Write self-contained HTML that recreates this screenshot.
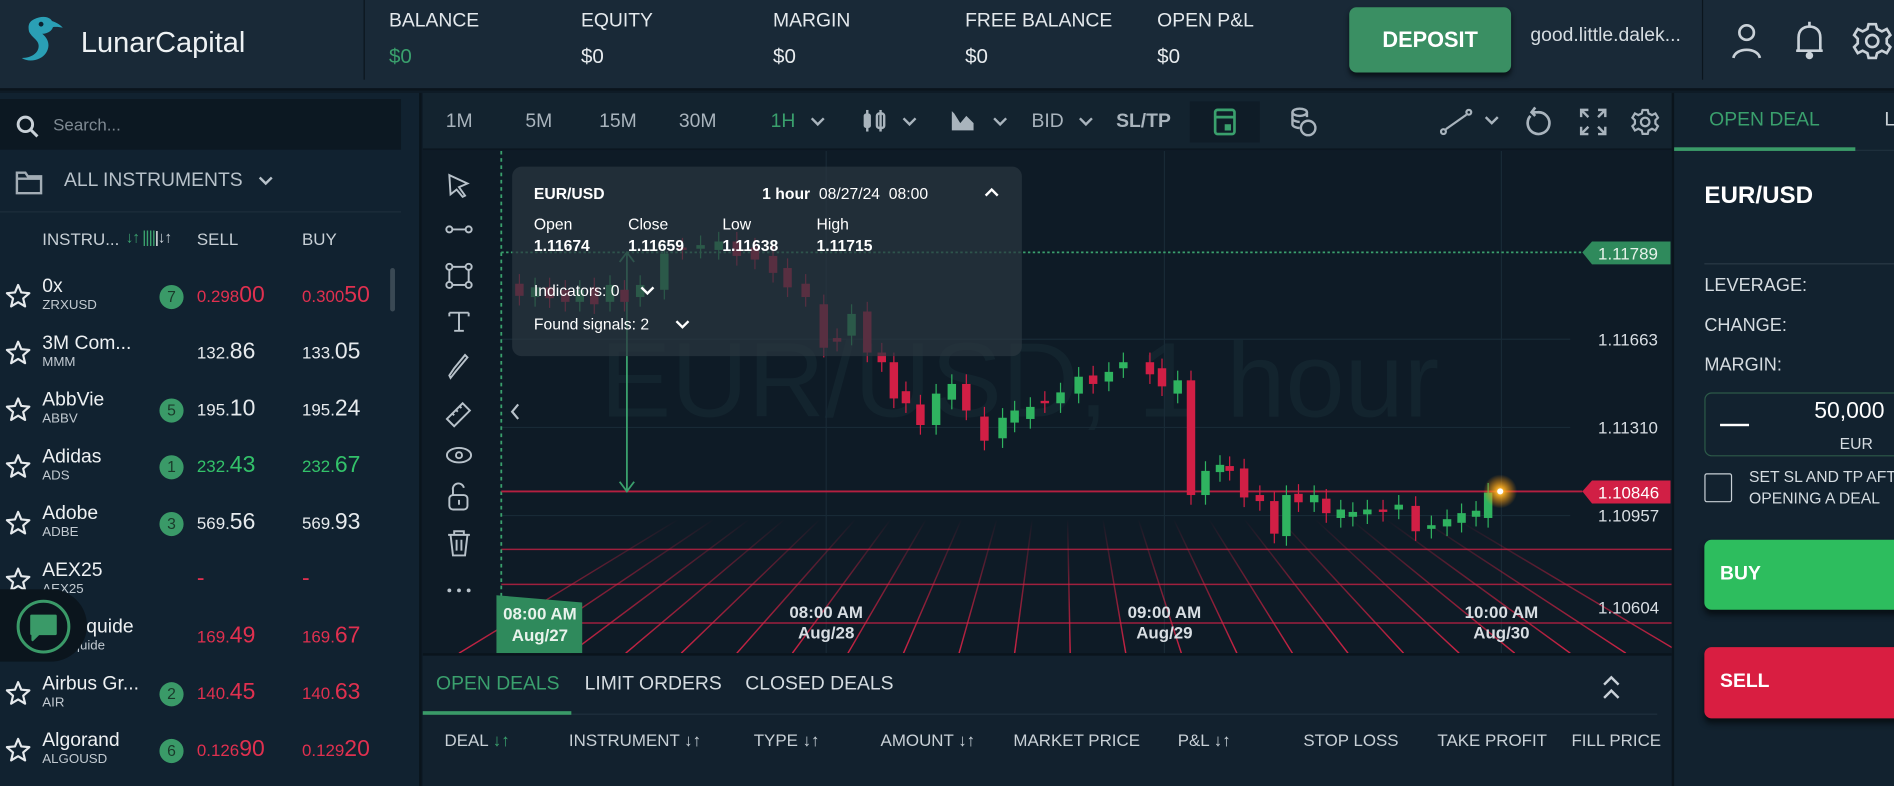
<!DOCTYPE html>
<html><head><meta charset="utf-8">
<style>
*{margin:0;padding:0;box-sizing:border-box}
html,body{width:1894px;height:786px;overflow:hidden;background:#0e1b26}
body{font-family:"Liberation Sans",sans-serif;color:#c9d1d8}
#w{position:absolute;left:0;top:0;width:1568px;height:651px;transform:scale(1.2079,1.2074);transform-origin:0 0;background:#0e1b26;overflow:hidden}
.a{position:absolute;white-space:nowrap}
.hdr{left:0;top:0;width:1568px;height:75px;background:#192937;border-bottom:2px solid #0a141c}
.lbl{font-size:16px;color:#e4e9ed}
.val{font-size:17px;color:#e8ecef}
.side{left:0;top:77px;width:349px;height:574px;background:#112230;border-right:2px solid #0a141c}
.row .nm{font-size:16px;color:#eef1f3}
.row .sy{font-size:11px;color:#c2cad1}
.badge{width:20px;height:20px;border-radius:50%;background:#3a9a68;color:#1a3a2a;font-size:13px;text-align:center;line-height:20px}
.pr{font-size:14px}
.pr b{font-weight:normal;font-size:19px}
.tb{font-size:16px;color:#a9b4bd}
.g{color:#3aa06d}
.r{color:#e0304f}
.gr{color:#33c26a}
</style></head><body><div id="w">

<!-- header -->
<div class="a hdr"></div>
<svg class="a" style="left:14px;top:12px" width="44" height="42" viewBox="0 0 44 42">
<path d="M14 4 C22 0 30 2 30 9 C30 14 24 16 21 16 C26 20 28 26 24 32 C20 38 10 40 4 36 C12 36 18 32 18 26 C18 21 12 19 10 14 C9 9 10 6 14 4Z" fill="#2a9fb5"/>
<path d="M22 5 C26 4 34 6 38 11 C34 10 30 10 28 11Z" fill="#2a9fb5"/>
<circle cx="20" cy="8" r="2" fill="#0b2230"/>
</svg>
<div class="a" style="left:67px;top:22px;font-size:24px;color:#eef2f4">LunarCapital</div>
<div class="a" style="left:301px;top:0;width:1px;height:66px;background:#0b151d"></div>
<div class="a lbl" style="left:322px;top:9px">BALANCE</div><div class="a val g" style="left:322px;top:37px">$0</div>
<div class="a lbl" style="left:481px;top:9px">EQUITY</div><div class="a val" style="left:481px;top:37px">$0</div>
<div class="a lbl" style="left:640px;top:9px">MARGIN</div><div class="a val" style="left:640px;top:37px">$0</div>
<div class="a lbl" style="left:799px;top:9px">FREE BALANCE</div><div class="a val" style="left:799px;top:37px">$0</div>
<div class="a lbl" style="left:958px;top:9px">OPEN P&amp;L</div><div class="a val" style="left:958px;top:37px">$0</div>
<div class="a" style="left:1117px;top:6px;width:134px;height:54px;background:#3a8f63;border-radius:6px;box-shadow:0 3px 4px #0a1218;color:#fff;font-weight:bold;font-size:18px;text-align:center;line-height:54px">DEPOSIT</div>
<div class="a" style="left:1267px;top:21px;font-size:16px;color:#d5dce1">good.little.dalek...</div>
<div class="a" style="left:1409px;top:0;width:1px;height:66px;background:#0b151d"></div>
<svg class="a" style="left:1430px;top:17px" width="32" height="34" viewBox="0 0 32 34" fill="none" stroke="#c9d1d8" stroke-width="2.2"><circle cx="16" cy="10" r="6"/><path d="M5 31 C7 22 25 22 27 31"/></svg>
<svg class="a" style="left:1482px;top:15px" width="32" height="36" viewBox="0 0 32 36" fill="none" stroke="#c9d1d8" stroke-width="2.2"><path d="M16 3 V6 M7 27 V16 C7 10 11 7 16 7 C21 7 25 10 25 16 V27 H5 M27 27 H5"/><circle cx="16" cy="31" r="2" fill="#c9d1d8"/></svg>
<svg class="a" style="left:1533px;top:17px" width="34" height="34" viewBox="0 0 34 34" fill="none" stroke="#c9d1d8" stroke-width="2.2"><circle cx="17" cy="17" r="5"/><path d="M14 3h6l1 4 4 2 4-2 3 5-3 3v4l3 3-3 5-4-2-4 2-1 4h-6l-1-4-4-2-4 2-3-5 3-3v-4l-3-3 3-5 4 2 4-2z"/></svg>

<!-- sidebar -->
<div class="a side"></div>
<div class="a" style="left:0;top:82px;width:332px;height:42px;background:#0c1822"></div>
<svg class="a" style="left:12px;top:94px" width="22" height="22" viewBox="0 0 22 22" fill="none" stroke="#c9d1d8" stroke-width="2.4"><circle cx="9" cy="9" r="6"/><path d="M13.5 13.5 L19 19"/></svg>
<div class="a" style="left:44px;top:95px;font-size:14px;color:#7f8a93">Search...</div>
<svg class="a" style="left:12px;top:140px" width="24" height="22" viewBox="0 0 24 22" fill="none" stroke="#a3adb5" stroke-width="2"><path d="M2 3 H9 L11 6 H22 V20 H2 Z M2 8 H22"/></svg>
<div class="a" style="left:53px;top:141px;font-size:16px;color:#b8c2ca">ALL INSTRUMENTS</div>
<svg class="a" style="left:212px;top:144px" width="16" height="12" viewBox="0 0 16 12" fill="none" stroke="#b8c2ca" stroke-width="2"><path d="M3 3 L8 8 L13 3"/></svg>
<div class="a" style="left:0;top:175px;width:332px;height:1px;background:#1d2e3b"></div>
<div class="a" style="left:35px;top:190px;font-size:14px;color:#c8d0d6">INSTRU...</div>
<div class="a" style="left:104px;top:188px;font-size:13px;color:#3aa06d;letter-spacing:-1px">↓↑ <span style="font-size:14px">||||</span><span style="color:#fff">|</span><span style="color:#c8d0d6">↓↑</span></div>
<div class="a" style="left:163px;top:190px;font-size:14px;color:#c8d0d6">SELL</div>
<div class="a" style="left:250px;top:190px;font-size:14px;color:#c8d0d6">BUY</div>
<div class="a" style="left:323px;top:222px;width:4px;height:36px;background:#3a4954;border-radius:2px"></div>

<div id="rows"></div>

<div class="a" style="left:0;top:488px;width:72px;height:60px;background:#0b151d;border-radius:0 30px 30px 0"></div>
<svg class="a" style="left:12px;top:495px" width="48" height="48" viewBox="0 0 48 48"><circle cx="24" cy="24" r="21" fill="none" stroke="#3a9a68" stroke-width="2.5"/><path d="M14 15 H34 V30 H20 L15 35 V30 H14 Z" fill="#3a9a68" stroke="#3a9a68" stroke-linejoin="round" stroke-width="2"/></svg>

<!-- toolbar -->
<div class="a" style="left:350px;top:77px;width:1034px;height:47px;background:#13232f;border-bottom:1px solid #0a141c"></div>
<div class="a tb" style="left:369px;top:92px">1M</div>
<div class="a tb" style="left:435px;top:92px">5M</div>
<div class="a tb" style="left:496px;top:92px">15M</div>
<div class="a tb" style="left:562px;top:92px">30M</div>
<div class="a tb g" style="left:638px;top:92px">1H</div>
<svg class="a" style="left:668px;top:94px;overflow:visible" width="480" height="16" fill="none" stroke="#a9b4bd" stroke-width="2">
<path d="M4 4 L9 9 L14 4"/>
<path d="M80 4 L85 9 L90 4"/>
<path d="M155 4 L160 9 L165 4"/>
<path d="M226 4 L231 9 L236 4"/>
</svg>
<svg class="a" style="left:713px;top:91px" width="22" height="18" viewBox="0 0 22 18"><rect x="2" y="3" width="6" height="12" rx="2" fill="#a9b4bd"/><rect x="13" y="3" width="6" height="12" rx="2" fill="none" stroke="#a9b4bd" stroke-width="2"/><path d="M5 0V18M16 0V18" stroke="#a9b4bd" stroke-width="2"/></svg>
<svg class="a" style="left:786px;top:90px" width="22" height="20" viewBox="0 0 22 20"><path d="M2 2 V18 H20 V12 L14 6 L9 12 L4 4Z" fill="#a9b4bd"/></svg>
<div class="a tb" style="left:854px;top:92px">BID</div>
<div class="a tb" style="left:924px;top:92px;font-weight:bold">SL/TP</div>
<div class="a" style="left:985px;top:84px;width:58px;height:34px;background:#0f1c27"></div>
<svg class="a" style="left:1003px;top:88px" width="22" height="26" viewBox="0 0 22 26" fill="none" stroke="#3aa06d" stroke-width="2.2"><rect x="3" y="3" width="16" height="20" rx="2"/><path d="M3 9 H19"/><rect x="12" y="16" width="3" height="3" fill="#3aa06d"/></svg>
<svg class="a" style="left:1066px;top:87px" width="26" height="28" viewBox="0 0 26 28" fill="none" stroke="#a9b4bd" stroke-width="2"><ellipse cx="10" cy="6" rx="6" ry="3"/><path d="M4 6V16C4 18 8 19 10 19M16 6V10"/><path d="M4 11C4 13 8 14 10 14"/><circle cx="17" cy="19" r="6"/></svg>
<svg class="a" style="left:1192px;top:90px" width="28" height="22" viewBox="0 0 28 22" fill="none" stroke="#a9b4bd" stroke-width="1.8"><circle cx="3" cy="19" r="2"/><circle cx="24" cy="3" r="2"/><path d="M5 17 L22 5"/></svg>
<svg class="a" style="left:1228px;top:94px" width="14" height="12" fill="none" stroke="#a9b4bd" stroke-width="2"><path d="M2 3 L7 8 L12 3"/></svg>
<svg class="a" style="left:1261px;top:88px" width="24" height="26" viewBox="0 0 24 26" fill="none" stroke="#a9b4bd" stroke-width="2.2"><path d="M6 8 A9 9 0 1 0 12 5 H8 M10 1 L7 5 L10 8"/></svg>
<svg class="a" style="left:1307px;top:89px" width="24" height="24" viewBox="0 0 24 24" fill="none" stroke="#a9b4bd" stroke-width="2"><path d="M2 8V2H8M2 2L8 8M22 8V2H16M22 2L16 8M2 16V22H8M2 22L8 16M22 16V22H16M22 22L16 16"/></svg>
<svg class="a" style="left:1350px;top:89px" width="24" height="24" viewBox="0 0 34 34" fill="none" stroke="#a9b4bd" stroke-width="2.6"><circle cx="17" cy="17" r="5"/><path d="M14 3h6l1 4 4 2 4-2 3 5-3 3v4l3 3-3 5-4-2-4 2-1 4h-6l-1-4-4-2-4 2-3-5 3-3v-4l-3-3 3-5 4 2 4-2z"/></svg>

<!-- chart -->
<svg class="a" id="ch" style="left:350px;top:125px" width="1035" height="416" viewBox="350 125 1035 416">
<defs>
<linearGradient id="rg" x1="0" y1="430" x2="0" y2="541" gradientUnits="userSpaceOnUse"><stop offset="0" stop-color="#c0203f" stop-opacity="0"/><stop offset="0.5" stop-color="#c0203f" stop-opacity="0.6"/><stop offset="1" stop-color="#e02448" stop-opacity="0.9"/></linearGradient>
<radialGradient id="glow"><stop offset="0" stop-color="#fff6c0"/><stop offset="0.25" stop-color="#ffb020" stop-opacity="0.9"/><stop offset="1" stop-color="#ff9000" stop-opacity="0"/></radialGradient>
</defs>
<rect x="350" y="125" width="1035" height="416" fill="#0e1b26"/>
<text x="497" y="345" font-size="88" fill="#13242e" font-family="Liberation Sans">EUR/USD, 1 hour</text>
<g stroke="#182a36" stroke-width="1"><path d="M684 125V541M964 125V541M1243 125V541M415 281H1300M415 354H1300M415 427H1300"/></g>
<g id="grid"></g>
<g stroke="#d02246" stroke-width="1.2" opacity="0.75"><path d="M415 455H1384M415 484H1384M415 516H1384"/></g>
<path d="M415 209H1310" stroke="#3aa06d" stroke-width="1.5" stroke-dasharray="2 2"/>
<path d="M415 125V495" stroke="#3aa06d" stroke-width="1.5" stroke-dasharray="3 3"/>
<path d="M415 407H1310" stroke="#b42040" stroke-width="1.5"/>
<path d="M519 209V407M513 217L519 209L525 217M513 399L519 407L525 399" stroke="#3aa06d" stroke-width="1.5" fill="none"/>
<g id="cd"></g>
<circle cx="1242" cy="407" r="14" fill="url(#glow)"/>
<circle cx="1242" cy="407" r="2.5" fill="#fff"/>
<path d="M1310 209L1318 200H1383V219H1318Z" fill="#2f8a5c"/>
<text x="1323" y="215" font-size="14" fill="#e6f2ea" font-family="Liberation Sans">1.11789</text>
<path d="M1310 407L1318 398H1383V417H1318Z" fill="#d11f45"/>
<text x="1323" y="413" font-size="14" fill="#fff" font-family="Liberation Sans">1.10846</text>
<g font-size="14" fill="#d8dee3" font-family="Liberation Sans">
<text x="1323" y="286">1.11663</text><text x="1323" y="359">1.11310</text><text x="1323" y="432">1.10957</text><text x="1323" y="508">1.10604</text>
</g>
<g font-size="14" fill="#d8dee3" font-family="Liberation Sans" text-anchor="middle" font-weight="bold">
<text x="684" y="512">08:00 AM</text><text x="684" y="529">Aug/28</text>
<text x="964" y="512">09:00 AM</text><text x="964" y="529">Aug/29</text>
<text x="1243" y="512">10:00 AM</text><text x="1243" y="529">Aug/30</text>
</g>
<path d="M411 493L482 499V541H411Z" fill="#2f8a5c"/>
<g font-size="14" fill="#e8f3ec" font-family="Liberation Sans" text-anchor="middle" font-weight="bold"><text x="447" y="513">08:00 AM</text><text x="447" y="531">Aug/27</text></g>
<!-- tools -->
<g fill="none" stroke="#b8c2ca" stroke-width="1.6">
<path d="M372 145L387 152L380 155L385 162L383 163L378 157L373 161Z"/>
<circle cx="372" cy="190" r="2.5"/><circle cx="388" cy="190" r="2.5"/><path d="M375 190H385"/>
<rect x="372" y="221" width="16" height="15"/><circle cx="372" cy="221" r="2.5" fill="#0e1b26"/><circle cx="388" cy="221" r="2.5" fill="#0e1b26"/><circle cx="372" cy="236" r="2.5" fill="#0e1b26"/><circle cx="388" cy="236" r="2.5" fill="#0e1b26"/>
<path d="M372 259H388M380 259V274M376 274H384M372 259V262M388 259V262"/>
<path d="M387 296L377 308L373 313L372 311L376 305L385 294Z"/>
<path d="M370 347L383 334L389 340L376 353Z M374 342L376 344M377 339L379 341M380 336L382 338"/>
<ellipse cx="380" cy="377" rx="10" ry="6"/><circle cx="380" cy="377" r="2.5"/>
<rect x="372" y="410" width="15" height="12" rx="3"/><path d="M375 410V406A4.5 4.5 0 0 1 384 404"/><path d="M380 414V418"/>
<path d="M371 443H389M376 443V440H384V443M373 443L375 460H385L387 443M378 447V456M382 447V456"/>
</g>
<g fill="#b8c2ca"><circle cx="372" cy="489" r="1.6"/><circle cx="380" cy="489" r="1.6"/><circle cx="388" cy="489" r="1.6"/></g>
<path d="M429 335L424 341L429 347" fill="none" stroke="#b8c2ca" stroke-width="1.8"/>
</svg>

<!-- tooltip -->
<div class="a" style="left:424px;top:138px;width:422px;height:157px;background:rgba(42,54,64,0.72);border-radius:8px"></div>
<div class="a" style="left:442px;top:153px;font-size:13px;font-weight:bold;color:#fff">EUR/USD</div>
<div class="a" style="left:631px;top:153px;font-size:13px;color:#fff"><b>1 hour</b>&nbsp; 08/27/24&nbsp; 08:00</div>
<svg class="a" style="left:814px;top:154px" width="14" height="10" fill="none" stroke="#fff" stroke-width="2"><path d="M2 8L7 3L12 8"/></svg>
<div class="a" style="left:442px;top:178px;font-size:13px;color:#fff">Open</div>
<div class="a" style="left:520px;top:178px;font-size:13px;color:#fff">Close</div>
<div class="a" style="left:598px;top:178px;font-size:13px;color:#fff">Low</div>
<div class="a" style="left:676px;top:178px;font-size:13px;color:#fff">High</div>
<div class="a" style="left:442px;top:196px;font-size:13px;font-weight:bold;color:#fff">1.11674</div>
<div class="a" style="left:520px;top:196px;font-size:13px;font-weight:bold;color:#fff">1.11659</div>
<div class="a" style="left:598px;top:196px;font-size:13px;font-weight:bold;color:#fff">1.11638</div>
<div class="a" style="left:676px;top:196px;font-size:13px;font-weight:bold;color:#fff">1.11715</div>
<div class="a" style="left:442px;top:233px;font-size:13px;color:#fff">Indicators: 0</div>
<div class="a" style="left:442px;top:261px;font-size:13px;color:#fff">Found signals: 2</div>
<svg class="a" style="left:558px;top:264px" width="14" height="10" fill="none" stroke="#fff" stroke-width="2"><path d="M2 2L7 7L12 2"/></svg>
<svg class="a" style="left:529px;top:236px" width="14" height="10" fill="none" stroke="#fff" stroke-width="2"><path d="M2 2L7 7L12 2"/></svg>

<!-- bottom panel -->
<div class="a" style="left:350px;top:541px;width:1034px;height:110px;background:#12212e;border-top:2px solid #0a141c"></div>
<div class="a g" style="left:361px;top:558px;font-size:16px">OPEN DEALS</div>
<div class="a" style="left:484px;top:558px;font-size:16px;color:#d5dce1">LIMIT ORDERS</div>
<div class="a" style="left:617px;top:558px;font-size:16px;color:#d5dce1">CLOSED DEALS</div>
<div class="a" style="left:350px;top:591px;width:1022px;height:1px;background:#1f303d"></div>
<div class="a" style="left:350px;top:589px;width:123px;height:3px;background:#3a9a68"></div>
<svg class="a" style="left:1325px;top:557px" width="18" height="26" fill="none" stroke="#c9d1d8" stroke-width="2"><path d="M3 10L9 4L15 10M3 21L9 15L15 21"/></svg>
<div class="a" style="left:368px;top:605px;font-size:14px;color:#c8d0d6">DEAL <span class="g">↓↑</span></div>
<div class="a" style="left:471px;top:605px;font-size:14px;color:#c8d0d6">INSTRUMENT <span>↓↑</span></div>
<div class="a" style="left:624px;top:605px;font-size:14px;color:#c8d0d6">TYPE ↓↑</div>
<div class="a" style="left:729px;top:605px;font-size:14px;color:#c8d0d6">AMOUNT ↓↑</div>
<div class="a" style="left:839px;top:605px;font-size:14px;color:#c8d0d6">MARKET PRICE</div>
<div class="a" style="left:975px;top:605px;font-size:14px;color:#c8d0d6">P&amp;L ↓↑</div>
<div class="a" style="left:1079px;top:605px;font-size:14px;color:#c8d0d6">STOP LOSS</div>
<div class="a" style="left:1190px;top:605px;font-size:14px;color:#c8d0d6">TAKE PROFIT</div>
<div class="a" style="left:1301px;top:605px;font-size:14px;color:#c8d0d6">FILL PRICE</div>

<!-- right panel -->
<div class="a" style="left:1384px;top:77px;width:184px;height:574px;background:#12222f;border-left:2px solid #0a141c"></div>
<div class="a" style="left:1386px;top:124px;width:182px;height:1px;background:#1f303d"></div>
<div class="a g" style="left:1415px;top:91px;font-size:16px">OPEN DEAL</div>
<div class="a" style="left:1560px;top:91px;font-size:16px;color:#c8d0d6">L</div>
<div class="a" style="left:1386px;top:122px;width:150px;height:3px;background:#3a9a68"></div>
<div class="a" style="left:1411px;top:151px;font-size:20px;font-weight:bold;color:#fff">EUR/USD</div>
<div class="a" style="left:1411px;top:218px;width:157px;height:1px;background:#2a3a46"></div>
<div class="a" style="left:1411px;top:228px;font-size:15px;color:#d5dce1">LEVERAGE:</div>
<div class="a" style="left:1411px;top:261px;font-size:15px;color:#d5dce1">CHANGE:</div>
<div class="a" style="left:1411px;top:294px;font-size:15px;color:#d5dce1">MARGIN:</div>
<div class="a" style="left:1411px;top:325px;width:170px;height:53px;border:1px solid #2c5a48;border-radius:6px"></div>
<div class="a" style="left:1424px;top:351px;width:24px;height:2px;background:#fff"></div>
<div class="a" style="left:1502px;top:330px;font-size:19px;color:#fff">50,000</div>
<div class="a" style="left:1523px;top:360px;font-size:13px;color:#d5dce1">EUR</div>
<div class="a" style="left:1411px;top:392px;width:23px;height:24px;border:1.5px solid #c8d0d6;border-radius:2px"></div>
<div class="a" style="left:1448px;top:387px;font-size:13px;color:#d5dce1">SET SL AND TP AFTER</div>
<div class="a" style="left:1448px;top:405px;font-size:13px;color:#d5dce1">OPENING A DEAL</div>
<div class="a" style="left:1411px;top:447px;width:170px;height:58px;background:#2dbd5e;border-radius:6px;box-shadow:0 4px 5px #081015"></div>
<div class="a" style="left:1424px;top:467px;font-size:16px;font-weight:bold;color:#fff">BUY</div>
<div class="a" style="left:1411px;top:536px;width:170px;height:59px;background:#d91e41;border-radius:6px;box-shadow:0 4px 5px #081015"></div>
<div class="a" style="left:1424px;top:556px;font-size:16px;font-weight:bold;color:#fff">SELL</div>

</div>
<script>
var rows=[["0x","ZRXUSD","7","0.298","00","0.300","50","r"],["3M Com...","MMM","","132.","86","133.","05",""],["AbbVie","ABBV","5","195.","10","195.","24",""],["Adidas","ADS","1","232.","43","232.","67","gr"],["Adobe","ADBE","3","569.","56","569.","93",""],["AEX25","AEX25","","","-","","-","r"],["Air Liquide","Air Liquide","","169.","49","169.","67","r"],["Airbus Gr...","AIR","2","140.","45","140.","63","r"],["Algorand","ALGOUSD","6","0.126","90","0.129","20","r"]];
var h="";
rows.forEach(function(r,i){var y=229+i*47;var c=r[7]?r[7]:"";
var col=c=="r"?"#e0304f":c=="gr"?"#33c26a":"#e6eaed";
h+='<svg class="a" style="left:4px;top:'+(y+5)+'px" width="22" height="22" viewBox="0 0 22 22"><path d="M11 2L13.6 8.2L20.3 8.8L15.2 13.2L16.8 19.8L11 16.3L5.2 19.8L6.8 13.2L1.7 8.8L8.4 8.2Z" fill="none" stroke="#e6eaed" stroke-width="1.8" stroke-linejoin="round"/></svg>';
h+='<div class="a row" style="left:35px;top:'+y+'px"><div class="nm">'+r[0]+'</div><div class="sy">'+r[1]+'</div></div>';
if(r[2])h+='<div class="a badge" style="left:132px;top:'+(y+7)+'px">'+r[2]+'</div>';
h+='<div class="a pr" style="left:163px;top:'+(y+5)+'px;color:'+col+'">'+r[3]+'<b>'+r[4]+'</b></div>';
h+='<div class="a pr" style="left:250px;top:'+(y+5)+'px;color:'+col+'">'+r[5]+'<b>'+r[6]+'</b></div>';});
document.getElementById("rows").outerHTML=h;
var g="";for(var xb=380;xb<=1420;xb+=46){var xt=880+(xb-880)*0.62;g+='<line x1="'+xt+'" y1="425" x2="'+xb+'" y2="541" stroke="url(#rg)" stroke-width="1.2"/>';}
document.getElementById("grid").innerHTML=g;
var d=[[430,235,245],[443,246,238],[455,238,247],[468,240,250],[480,250,240],[492,238,252],[505,250,236],[517,240,250],[530,246,236],[550,240,210],[565,205,207],[580,206,203],[595,207,200],[610,200,212],[625,205,215],[640,212,226],[652,222,238],[667,235,246],[682,252,288],[693,280,283],[705,278,260],[718,258,292],[730,292,300],[740,300,330],[750,324,334],[762,335,352],[775,352,326],[788,331,318],[800,318,340],[815,345,365],[830,363,346],[840,350,340],[853,347,337],[865,332,334],[878,334,325],[893,326,312],[905,311,318],[918,316,308],[930,305,300],[952,300,310],[962,305,320],[975,326,315],[986,315,410],[998,410,390],[1010,391,385],[1018,386,390],[1030,388,412],[1043,410,415],[1055,415,442],[1065,444,410],[1075,409,416],[1088,416,410],[1098,413,425],[1110,429,422],[1120,428,424],[1132,426,422],[1145,422,424],[1158,422,418],[1172,419,440],[1185,438,435],[1198,436,430],[1210,433,425],[1222,428,423],[1232,429,408]];
var s="";d.forEach(function(c){var up=c[2]<c[1];var col=up?"#2fb360":"#d11f45";var t=Math.min(c[1],c[2]),b=Math.max(c[1],c[2]);var hh=Math.max(b-t,2);
s+='<line x1="'+c[0]+'" x2="'+c[0]+'" y1="'+(t-8)+'" y2="'+(b+8)+'" stroke="'+col+'" stroke-width="1"/><rect x="'+(c[0]-3.5)+'" y="'+t+'" width="7" height="'+hh+'" fill="'+col+'"/>';});
document.getElementById("cd").innerHTML=s;
</script>
</body></html>
